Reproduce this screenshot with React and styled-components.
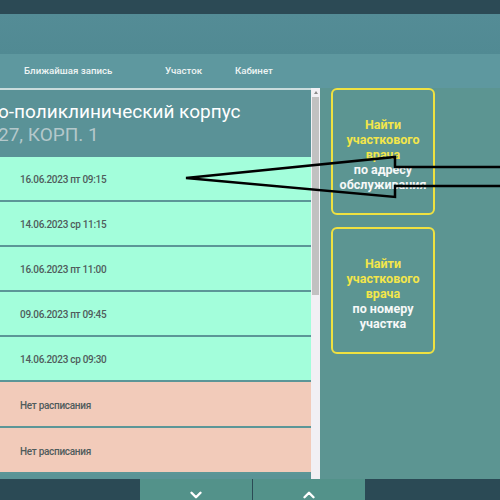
import React from "react";
import styled, { createGlobalStyle } from "styled-components";
import { ChevronDown, ChevronUp } from "lucide-react";

const Global = createGlobalStyle`
  html, body { margin: 0; padding: 0; }
  body { font-family: Roboto, "Noto Sans", "Liberation Sans", sans-serif; }
  * { box-sizing: border-box; }
`;

const Screen = styled.div`
  position: relative;
  width: 500px;
  height: 500px;
  overflow: hidden;
  display: flex;
  flex-direction: column;
  background: #5c9594;
`;

const TopBar = styled.div`
  height: 14px;
  flex: none;
  background: #2c4a55;
`;

const Header = styled.div`
  height: 40px;
  flex: none;
  background: linear-gradient(#548c96, #518a93);
`;

const Main = styled.div`
  flex: 1;
  display: flex;
  flex-direction: column;
  min-height: 0;
`;

const Tabs = styled.div`
  height: 34px;
  flex: none;
  display: flex;
  align-items: center;
  padding-left: 24px;
  background: #5e989f;
  padding-bottom: 1px;
`;

const Tab = styled.div`
  font-size: 9.7px;
  font-weight: 500;
  color: #eef4f4;
  width: ${(p) => p.w}px;
  white-space: nowrap;
`;

const Content = styled.div`
  flex: 1;
  display: flex;
  min-height: 0;
  background: #5c9592;
`;

const ListPanel = styled.div`
  width: 320px;
  flex: none;
  display: flex;
  height: 391px;
`;

const ListBody = styled.div`
  width: 311px;
  flex: none;
  display: flex;
  flex-direction: column;
  overflow: hidden;
  background: #5a9496;
  border-top: 2px solid #c9dcdc;
`;

const ListHead = styled.div`
  height: 67px;
  flex: none;
  background: #5a9297;
  padding-top: 10px;
  overflow: hidden;
`;

const Title = styled.div`
  font-size: 19px;
  line-height: 23px;
  color: #ffffff;
  white-space: nowrap;
  margin-left: -2px;
`;

const Subtitle = styled.div`
  font-size: 19px;
  line-height: 23px;
  color: #b4c8cb;
  white-space: nowrap;
  margin-left: -2px;
`;

const Row = styled.div`
  height: ${(p) => p.h}px;
  flex: none;
  display: flex;
  align-items: center;
  padding-left: 20px;
  padding-top: 2px;
  background: ${(p) => (p.free ? "#f2cbba" : "#a3fedb")};
  border-bottom: 2px solid #5b9697;
  font-size: 10px;
  font-weight: 500;
  letter-spacing: -0.3px;
  color: #505c5c;
`;

const Scrollbar = styled.div`
  width: 9px;
  flex: none;
  background: #f1f0f4;
  display: flex;
  flex-direction: column;
  align-items: center;
  height: 391px;
`;

const ScrollArrow = styled.div`
  height: 9px;
  flex: none;
  width: 100%;
  display: flex;
  align-items: center;
  justify-content: center;
  &::before {
    content: "";
    border-left: 2.5px solid transparent;
    border-right: 2.5px solid transparent;
    border-bottom: 3px solid #8a8a8a;
  }
`;

const Thumb = styled.div`
  width: 7px;
  height: 198px;
  background: #c1c1c1;
`;

const Cards = styled.div`
  padding-left: 11px;
  display: flex;
  flex-direction: column;
  gap: 12px;
`;

const Card = styled.div`
  width: 104px;
  height: 127px;
  border: 2px solid #efe141;
  border-radius: 6px;
  display: flex;
  flex-direction: column;
  align-items: center;
  justify-content: center;
  padding-top: 5px;
  text-align: center;
  font-size: 12.5px;
  font-weight: 700;
  line-height: 15px;
`;

const Yellow = styled.div`
  color: #f3e64a;
`;

const White = styled.div`
  color: #f6f8f8;
`;

const BottomBar = styled.div`
  height: 21px;
  flex: none;
  display: flex;
  background: #2b4a55;
`;

const Spacer = styled.div`
  width: ${(p) => p.w}px;
  flex: none;
`;

const NavButton = styled.div`
  width: ${(p) => p.w}px;
  flex: none;
  background: #53928a;
  display: flex;
  justify-content: center;
  align-items: flex-start;
  padding-top: 7px;
  color: #ffffff;
  margin-right: ${(p) => p.gap || 0}px;
`;

const ArrowOverlay = styled.svg`
  position: absolute;
  left: 0;
  top: 0;
  pointer-events: none;
`;

const slots = [
  "16.06.2023 пт 09:15",
  "14.06.2023 ср 11:15",
  "16.06.2023 пт 11:00",
  "09.06.2023 пт 09:45",
  "14.06.2023 ср 09:30",
];

export default function App() {
  return (
    <Screen>
      <Global />
      <TopBar />
      <Header />
      <Main>
        <Tabs>
          <Tab w={141}>Ближайшая запись</Tab>
          <Tab w={70}>Участок</Tab>
          <Tab w={60}>Кабинет</Tab>
        </Tabs>
        <Content>
          <ListPanel>
            <ListBody>
              <ListHead>
                <Title>о-поликлинический корпус</Title>
                <Subtitle>27, КОРП. 1</Subtitle>
              </ListHead>
              {slots.map((s) => (
                <Row key={s} h={45}>{s}</Row>
              ))}
              <Row free h={46}>Нет расписания</Row>
              <Row free h={46}>Нет расписания</Row>
            </ListBody>
            <Scrollbar>
              <ScrollArrow />
              <Thumb />
            </Scrollbar>
          </ListPanel>
          <Cards>
            <Card>
              <Yellow>Найти</Yellow>
              <Yellow>участкового</Yellow>
              <Yellow>врача</Yellow>
              <White>по адресу</White>
              <White>обслуживания</White>
            </Card>
            <Card>
              <Yellow>Найти</Yellow>
              <Yellow>участкового</Yellow>
              <Yellow>врача</Yellow>
              <White>по номеру</White>
              <White>участка</White>
            </Card>
          </Cards>
        </Content>
      </Main>
      <BottomBar>
        <Spacer w={140} />
        <NavButton w={112} gap={1}>
          <ChevronDown size={18} strokeWidth={3.2} />
        </NavButton>
        <NavButton w={112}>
          <ChevronUp size={18} strokeWidth={3.2} />
        </NavButton>
      </BottomBar>
      <ArrowOverlay width="500" height="500" viewBox="0 0 500 500">
        <polyline
          points="502,167 395,167 395,157 186,178 395,197 395,186 502,186"
          fill="none"
          stroke="#000"
          strokeWidth="2.5"
          strokeLinejoin="miter"
        />
      </ArrowOverlay>
    </Screen>
  );
}
